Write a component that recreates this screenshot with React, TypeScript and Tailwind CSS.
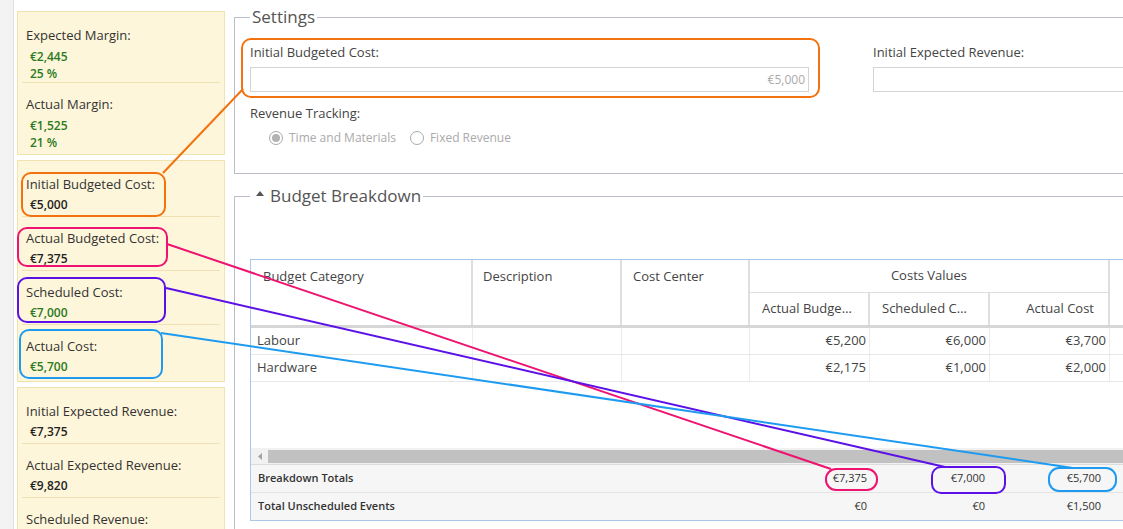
import React from 'react';

type Tone = 'green' | 'dark';

interface SummaryItem {
    label: string;
    values: string[];
    tone: Tone;
}

interface SummaryGroup {
    compact?: boolean;
    items: SummaryItem[];
}

const SUMMARY_GROUPS: SummaryGroup[] = [
    {
        compact: true,
        items: [
            { label: 'Expected Margin:', values: ['€2,445', '25 %'], tone: 'green' },
            { label: 'Actual Margin:', values: ['€1,525', '21 %'], tone: 'green' },
        ],
    },
    {
        items: [
            { label: 'Initial Budgeted Cost:', values: ['€5,000'], tone: 'dark' },
            { label: 'Actual Budgeted Cost:', values: ['€7,375'], tone: 'dark' },
            { label: 'Scheduled Cost:', values: ['€7,000'], tone: 'green' },
            { label: 'Actual Cost:', values: ['€5,700'], tone: 'green' },
        ],
    },
    {
        items: [
            { label: 'Initial Expected Revenue:', values: ['€7,375'], tone: 'dark' },
            { label: 'Actual Expected Revenue:', values: ['€9,820'], tone: 'dark' },
            { label: 'Scheduled Revenue:', values: [], tone: 'green' },
        ],
    },
];

const BUDGET_ROWS = [
    { category: 'Labour', budgeted: '€5,200', scheduled: '€6,000', actual: '€3,700' },
    { category: 'Hardware', budgeted: '€2,175', scheduled: '€1,000', actual: '€2,000' },
];

const GRID_COLS = 'grid grid-cols-[222px_149px_128px_120px_120px_120px_1fr]';

function SummaryBox({ group }: { group: SummaryGroup }) {
    return (
        <div className="border border-[#f1e2b2] bg-[#fef6da] px-[4px] pb-[3px] pt-[2px]">
            {group.items.map((item, index) => {
                const last = index === group.items.length - 1;
                return (
                    <div
                        key={item.label}
                        className={`px-[4px] pt-[12px] ${group.compact ? 'pb-0' : 'pb-[3px]'} ${last ? '' : 'border-b border-[#f0e1b4]'}`}
                    >
                        <div className="text-[13px] leading-[18px] text-[#333]">{item.label}</div>
                        {item.values.length > 0 && (
                            <div
                                className={`${group.compact ? 'mt-[4px]' : 'mt-[3px]'} pl-[4px] text-[12px] font-semibold leading-[17px] ${item.tone === 'green' ? 'text-[#2b7a1e]' : 'text-[#222]'}`}
                            >
                                {item.values.map((value) => (
                                    <div key={value}>{value}</div>
                                ))}
                            </div>
                        )}
                    </div>
                );
            })}
        </div>
    );
}

function Radio({ checked, label }: { checked?: boolean; label: string }) {
    return (
        <span className="inline-flex items-center gap-[6px] text-[12px] leading-[18px] text-[#aaa]">
            <span className="flex h-[14px] w-[14px] items-center justify-center rounded-full border border-[#a9a9a9] bg-white">
                {checked && <span className="h-[8px] w-[8px] rounded-full bg-[#b3b3b3]" />}
            </span>
            {label}
        </span>
    );
}

function SettingsPanel() {
    return (
        <fieldset className="border border-[#babecb] px-[15px] pb-[26px]">
            <legend className="px-[2px] text-[17px] leading-[22px] text-[#555]">Settings</legend>
            <div className="grid grid-cols-[623px_1fr] pt-[15px]">
                <div>
                    <div className="text-[13px] leading-[18px] text-[#444]">Initial Budgeted Cost:</div>
                    <div className="mt-[6px] flex h-[25px] w-[559px] items-center justify-end border border-[#d4d4d4] px-[3px] text-[12px] text-[#aaa]">
                        €5,000
                    </div>
                </div>
                <div>
                    <div className="text-[13px] leading-[18px] text-[#444]">Initial Expected Revenue:</div>
                    <div className="mt-[6px] h-[25px] border border-[#d4d4d4]" />
                </div>
            </div>
            <div className="mt-[12px] text-[13px] leading-[18px] text-[#444]">Revenue Tracking:</div>
            <div className="mt-[7px] flex gap-[14px] pl-[19px]">
                <Radio checked label="Time and Materials" />
                <Radio label="Fixed Revenue" />
            </div>
        </fieldset>
    );
}

function BudgetGrid() {
    return (
        <div className="border-b border-l border-t border-[#a9c8ea]">
            {/* header */}
            <div className={`${GRID_COLS} grid-rows-[33px_32px] border-b-[3px] border-[#d6d6d6] text-[13px] text-[#444]`}>
                <div className="row-span-2 border-r-2 border-[#dedede] pl-[12px] pt-[7px] leading-[18px]">Budget Category</div>
                <div className="row-span-2 border-r-2 border-[#dedede] pl-[10px] pt-[7px] leading-[18px]">Description</div>
                <div className="row-span-2 border-r-2 border-[#dedede] pl-[11px] pt-[7px] leading-[18px]">Cost Center</div>
                <div className="col-span-3 flex items-center justify-center border-b border-r-2 border-[#dedede]">Costs Values</div>
                <div className="row-span-2" />
                <div className="flex items-center justify-end border-r-2 border-[#dedede] pl-[12px] pr-[14px]">
                    <span className="truncate">Actual Budgeted Cost</span>
                </div>
                <div className="flex items-center justify-end border-r-2 border-[#dedede] pl-[12px] pr-[14px]">
                    <span className="truncate">Scheduled Cost</span>
                </div>
                <div className="flex items-center justify-end border-r-2 border-[#dedede] pl-[12px] pr-[14px]">
                    <span className="truncate">Actual Cost</span>
                </div>
            </div>
            {/* rows */}
            <div className="h-[120px] text-[13px] text-[#444]">
                {BUDGET_ROWS.map((row) => (
                    <div key={row.category} className={`${GRID_COLS} h-[27px] border-b border-[#e8e8e8]`}>
                        <div className="flex items-center border-r border-[#ececec] pl-[6px]">{row.category}</div>
                        <div className="border-r border-[#ececec]" />
                        <div className="border-r border-[#ececec]" />
                        <div className="flex items-center justify-end border-r border-[#ececec] pr-[3px]">{row.budgeted}</div>
                        <div className="flex items-center justify-end border-r border-[#ececec] pr-[3px]">{row.scheduled}</div>
                        <div className="flex items-center justify-end border-r border-[#ececec] pr-[3px]">{row.actual}</div>
                        <div />
                    </div>
                ))}
            </div>
            {/* horizontal scrollbar */}
            <div className="flex h-[16px] items-center bg-[#f1f1f1]">
                <div className="flex w-[17px] justify-center">
                    <svg width="4" height="7" viewBox="0 0 4 7" aria-hidden>
                        <polygon points="4,0 0,3.5 4,7" fill="#a3a3a3" />
                    </svg>
                </div>
                <div className="h-[13px] flex-1 bg-[#c1c1c1]" />
            </div>
            {/* totals */}
            <div className="border-t border-[#dcdcdc] bg-[#f6f6f6] text-[11px] text-[#333]">
                <div className={`${GRID_COLS} h-[28px] items-center border-b border-[#e3e3e3]`}>
                    <div className="col-span-3 pl-[7px] font-semibold">Breakdown Totals</div>
                    <div className="pr-[3px] text-right">€7,375</div>
                    <div className="pr-[5px] text-right">€7,000</div>
                    <div className="pr-[9px] text-right">€5,700</div>
                    <div />
                </div>
                <div className={`${GRID_COLS} h-[27px] items-center`}>
                    <div className="col-span-3 pl-[7px] font-semibold">Total Unscheduled Events</div>
                    <div className="pr-[3px] text-right">€0</div>
                    <div className="pr-[5px] text-right">€0</div>
                    <div className="pr-[9px] text-right">€1,500</div>
                    <div />
                </div>
            </div>
        </div>
    );
}

function BreakdownPanel() {
    return (
        <fieldset className="mt-[11px] border border-[#babecb] px-[15px] pb-[40px]">
            <legend className="px-[2px]">
                <span className="flex items-start text-[17px] leading-[22px] text-[#555]">
                    <svg className="ml-[4px] mr-[6px] mt-[6px]" width="8" height="5" viewBox="0 0 8 5" aria-hidden>
                        <polygon points="4,0 8,5 0,5" fill="#555" />
                    </svg>
                    Budget Breakdown
                </span>
            </legend>
            <div className="pt-[52px]">
                <BudgetGrid />
            </div>
        </fieldset>
    );
}

// callout marks linking the sidebar figures to where they come from
function Annotations() {
    return (
        <svg
            className="pointer-events-none absolute left-0 top-0"
            width="1123"
            height="529"
            viewBox="0 0 1123 529"
            fill="none"
            strokeWidth="2"
            aria-hidden
        >
            <g stroke="#f2720f">
                <rect x="22" y="173" width="143" height="43" rx="9" />
                <rect x="242" y="39" width="577" height="58" rx="9" />
                <line x1="163" y1="173" x2="243" y2="89" />
            </g>
            <g stroke="#ee1370">
                <rect x="18" y="228" width="149" height="38" rx="9" />
                <rect x="826" y="469" width="51" height="21" rx="10" />
                <line x1="167" y1="244" x2="831" y2="469" />
            </g>
            <g stroke="#5a10e6">
                <rect x="18" y="278" width="147" height="44" rx="9" />
                <rect x="932" y="467" width="73" height="26" rx="9" />
                <line x1="166" y1="288" x2="945" y2="467" />
            </g>
            <g stroke="#1e9bf0">
                <rect x="20" y="330" width="142" height="48" rx="9" />
                <rect x="1049" y="468" width="67" height="23" rx="10" />
                <line x1="161" y1="333" x2="1073" y2="468" />
            </g>
        </svg>
    );
}

export default function App() {
    return (
        <div className="relative flex h-[529px] w-[1123px] overflow-hidden bg-white font-['Open_Sans',sans-serif] text-[#444]">
            <div className="w-[14px] shrink-0 border-r border-[#e2e2e2] bg-[#f3f3f3]" />
            <aside className="ml-[3px] flex w-[208px] shrink-0 flex-col gap-[5px] pt-[11px]">
                {SUMMARY_GROUPS.map((group, index) => (
                    <SummaryBox key={index} group={group} />
                ))}
            </aside>
            <main className="ml-[9px] w-[1000px] shrink-0 pt-[6px]">
                <SettingsPanel />
                <BreakdownPanel />
            </main>
            <Annotations />
        </div>
    );
}
